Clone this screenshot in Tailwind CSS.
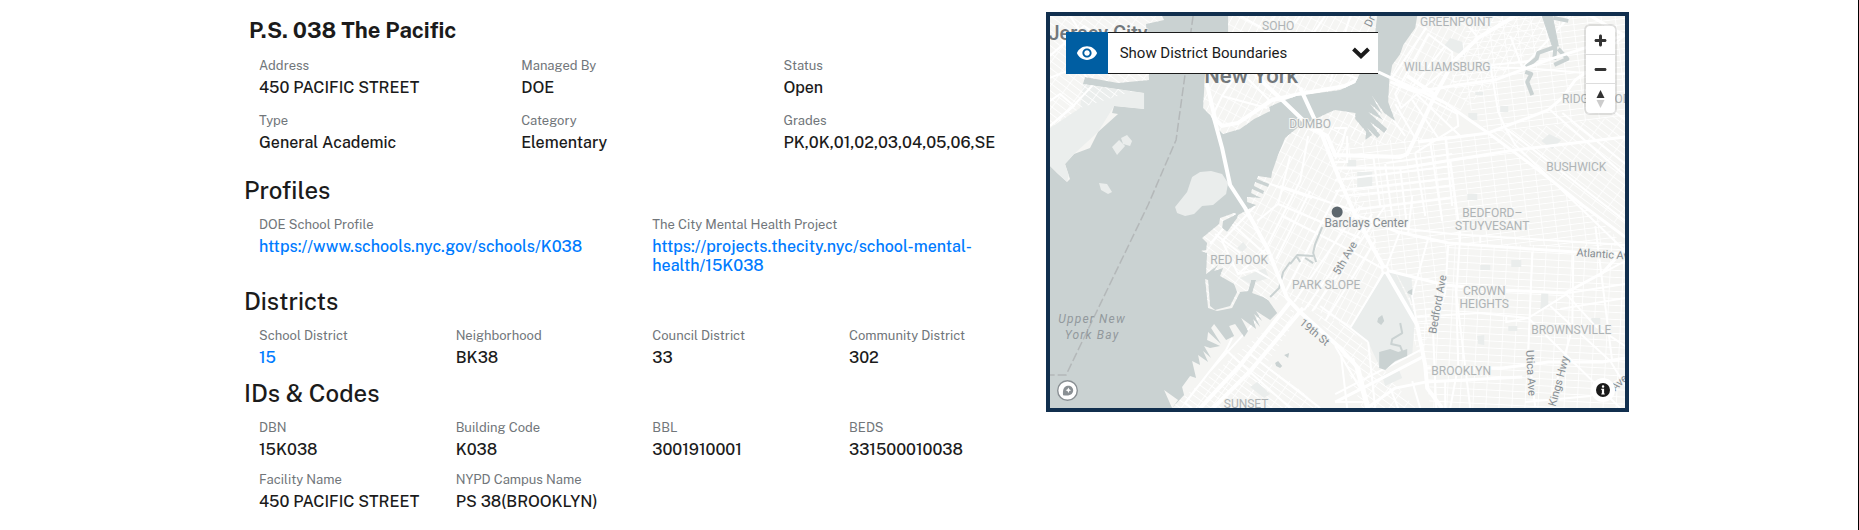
<!DOCTYPE html>
<html lang="en">
  <head>
    <meta charset="UTF-8" />
    <meta name="viewport" content="width=device-width, initial-scale=1.0" />
    <title>P.S. 038 The Pacific</title>
    <script src="https://cdn.jsdelivr.net/npm/@tailwindcss/browser@4"></script>
  </head>
  <body class="min-h-screen bg-white border-r border-black font-['Public_Sans','Inter',sans-serif] text-[#1b1b1b]">
    <main class="mx-auto max-w-[1400px] grid grid-cols-12">
      <section class="col-span-7 px-[15px] pt-4">
        <h1 class="pl-[5px] mb-3 text-[22px] leading-7 font-bold">P.S. 038 The Pacific</h1>

        <dl class="grid grid-cols-3 gap-y-[14px]">
          <div class="px-[15px]">
            <dt class="mb-0.5 text-[13px] leading-5 text-[#71767a]">Address</dt>
            <dd class="text-[16px] leading-[19px] font-medium">450 PACIFIC STREET</dd>
          </div>
          <div class="px-[15px]">
            <dt class="mb-0.5 text-[13px] leading-5 text-[#71767a]">Managed By</dt>
            <dd class="text-[16px] leading-[19px] font-medium">DOE</dd>
          </div>
          <div class="px-[15px]">
            <dt class="mb-0.5 text-[13px] leading-5 text-[#71767a]">Status</dt>
            <dd class="text-[16px] leading-[19px] font-medium">Open</dd>
          </div>
          <div class="px-[15px]">
            <dt class="mb-0.5 text-[13px] leading-5 text-[#71767a]">Type</dt>
            <dd class="text-[16px] leading-[19px] font-medium">General Academic</dd>
          </div>
          <div class="px-[15px]">
            <dt class="mb-0.5 text-[13px] leading-5 text-[#71767a]">Category</dt>
            <dd class="text-[16px] leading-[19px] font-medium">Elementary</dd>
          </div>
          <div class="px-[15px]">
            <dt class="mb-0.5 text-[13px] leading-5 text-[#71767a]">Grades</dt>
            <dd class="text-[16px] leading-[19px] font-medium">PK,0K,01,02,03,04,05,06,SE</dd>
          </div>
        </dl>

        <h2 class="mt-6 mb-2.5 text-[24px] leading-[29px] font-medium">Profiles</h2>
        <dl class="grid grid-cols-2">
          <div class="px-[15px]">
            <dt class="mb-0.5 text-[13px] leading-5 text-[#71767a]">DOE School Profile</dt>
            <dd class="text-[16px] leading-[19px] font-medium">
              <a href="https://www.schools.nyc.gov/schools/K038" class="text-[#007bff] hover:underline">https://www.schools.nyc.gov/schools/K038</a>
            </dd>
          </div>
          <div class="px-[15px]">
            <dt class="mb-0.5 text-[13px] leading-5 text-[#71767a]">The City Mental Health Project</dt>
            <dd class="text-[16px] leading-[19px] font-medium">
              <a href="https://projects.thecity.nyc/school-mental-health/15K038" class="text-[#007bff] hover:underline">https://projects.thecity.nyc/school-mental-health/15K038</a>
            </dd>
          </div>
        </dl>

        <h2 class="mt-3 mb-2.5 text-[24px] leading-[29px] font-medium">Districts</h2>
        <dl class="grid grid-cols-4">
          <div class="px-[15px]">
            <dt class="mb-0.5 text-[13px] leading-5 text-[#71767a]">School District</dt>
            <dd class="text-[16px] leading-[19px] font-medium">
              <a href="/districts/15" class="text-[#007bff] hover:underline">15</a>
            </dd>
          </div>
          <div class="px-[15px]">
            <dt class="mb-0.5 text-[13px] leading-5 text-[#71767a]">Neighborhood</dt>
            <dd class="text-[16px] leading-[19px] font-medium">BK38</dd>
          </div>
          <div class="px-[15px]">
            <dt class="mb-0.5 text-[13px] leading-5 text-[#71767a]">Council District</dt>
            <dd class="text-[16px] leading-[19px] font-medium">33</dd>
          </div>
          <div class="px-[15px]">
            <dt class="mb-0.5 text-[13px] leading-5 text-[#71767a]">Community District</dt>
            <dd class="text-[16px] leading-[19px] font-medium">302</dd>
          </div>
        </dl>

        <h2 class="mt-3 mb-2.5 text-[24px] leading-[29px] font-medium">IDs &amp; Codes</h2>
        <dl class="grid grid-cols-4 gap-y-[11px]">
          <div class="px-[15px]">
            <dt class="mb-0.5 text-[13px] leading-5 text-[#71767a]">DBN</dt>
            <dd class="text-[16px] leading-[19px] font-medium">15K038</dd>
          </div>
          <div class="px-[15px]">
            <dt class="mb-0.5 text-[13px] leading-5 text-[#71767a]">Building Code</dt>
            <dd class="text-[16px] leading-[19px] font-medium">K038</dd>
          </div>
          <div class="px-[15px]">
            <dt class="mb-0.5 text-[13px] leading-5 text-[#71767a]">BBL</dt>
            <dd class="text-[16px] leading-[19px] font-medium">3001910001</dd>
          </div>
          <div class="px-[15px]">
            <dt class="mb-0.5 text-[13px] leading-5 text-[#71767a]">BEDS</dt>
            <dd class="text-[16px] leading-[19px] font-medium">331500010038</dd>
          </div>
          <div class="px-[15px]">
            <dt class="mb-0.5 text-[13px] leading-5 text-[#71767a]">Facility Name</dt>
            <dd class="text-[16px] leading-[19px] font-medium">450 PACIFIC STREET</dd>
          </div>
          <div class="px-[15px]">
            <dt class="mb-0.5 text-[13px] leading-5 text-[#71767a]">NYPD Campus Name</dt>
            <dd class="text-[16px] leading-[19px] font-medium">PS 38(BROOKLYN)</dd>
          </div>
        </dl>
      </section>

      <section class="col-span-5 pt-3">
        <div class="relative h-[400px] overflow-hidden border-4 border-[#112f4e] bg-[#cad2d2]">
          <svg class="block w-full h-full" viewBox="0 0 575 392" preserveAspectRatio="xMidYMid slice" role="img" aria-label="Map of Brooklyn">
            <defs>
              <pattern id="grid-a" width="7" height="11" patternUnits="userSpaceOnUse" patternTransform="rotate(28)">
                <path d="M0 0H7M0 0V11" stroke="#fff" stroke-width="1.6" fill="none" />
              </pattern>
              <pattern id="grid-b" width="14" height="6" patternUnits="userSpaceOnUse" patternTransform="rotate(-7)">
                <path d="M0 0H14M0 0V6" stroke="#fff" stroke-width="1.6" fill="none" />
              </pattern>
              <pattern id="grid-c" width="6" height="14" patternUnits="userSpaceOnUse" patternTransform="rotate(-53)">
                <path d="M0 0H6M0 0V14" stroke="#fff" stroke-width="1.6" fill="none" />
              </pattern>
              <pattern id="grid-d" width="13" height="7" patternUnits="userSpaceOnUse" patternTransform="rotate(3)">
                <path d="M0 0H13M0 0V7" stroke="#fff" stroke-width="1.6" fill="none" />
              </pattern>
              <pattern id="grid-e" width="12" height="6" patternUnits="userSpaceOnUse" patternTransform="rotate(36)">
                <path d="M0 0H12M0 0V6" stroke="#fff" stroke-width="1.6" fill="none" />
              </pattern>
              <clipPath id="land">
                <path d="M367 0L365 12L353 29L350 38L342 49L339 66L338 86L345 105L334 97L322 80L332 98L320 88L333 104L318 96L337 113L334 117L320 106L330 119L327 122L317 112L322 119L315 124L316 116L305 103L305 97L285 94L280 96L263 104L247 112L235 122L228 139L222 156L221 162L208 160L207 163L219 168L218 171L205 166L204 170L214 175L213 178L202 173L201 177L211 182L197 181L197 186L206 189L188 199L187 202L177 216L172 212L173 205L181 201L186 198L184 197L170 202L169 208L152 222L157 227L156 234L151 235L157 237L156 258L168 249L164 255L173 252L170 260L184 268L187 276L180 290L165 294L160 290L158 264L155 263L158 292L167 295L182 292L190 276L198 275L201 264L206 264L202 277L213 281L218 284L227 297L220 304L206 295L212 305L204 298L210 311L203 303L206 313L191 302L198 315L194 321L185 308L179 310L184 320L176 324L164 308L161 312L171 328L158 316L157 324L170 330L160 332L154 330L161 342L153 335L158 346L148 339L150 349L142 345L146 362L140 360L132 371L134 379L122 392L114 374L128 384L122 392H575V0Z" />
                <path d="M178 0L178 16L155 58L153 92L160 99L167 112L173 118L190 113L204 103L220 95L219 91L230 86L246 80L290 74L305 67L310 57L325 16L327 0Z" />
                <path d="M0 0H112L114 4L96 8L99 64L68 67L35 61L33 68L94 77V93L64 90L62 97L68 98L48 116L40 132L24 138L15 148L20 163L17 166L8 158L0 150Z" />
              </clipPath>
            </defs>

            <!-- land -->
            <g clip-path="url(#land)">
              <rect width="575" height="392" fill="#f5f5f3" />
              <path d="M33 68L94 77V93L64 90L48 116L24 138L17 166L0 150V112L30 92Z" fill="#ebeeed" />
              <path d="M0 0H112V66L30 92L0 112Z" fill="url(#grid-c)" />
              <path d="M150 0H330V120H150Z" fill="url(#grid-a)" />
              <path d="M335 0H520L445 66L372 126L300 130V90Z" fill="url(#grid-a)" />
              <path d="M420 0H575V100L438 117L400 66Z" fill="url(#grid-b)" />
              <path d="M438 117L575 100V215L465 134Z" fill="url(#grid-c)" />
              <path d="M285 128L438 117L540 195L575 230H398L310 205Z" fill="url(#grid-b)" />
              <path d="M398 229H575V392H380L367 300L395 276Z" fill="url(#grid-d)" />
              <path d="M310 205L398 229L395 276L370 340L335 254Z" fill="url(#grid-b)" />
              <path d="M235 110H290L335 254L300 312L240 282L190 185Z" fill="url(#grid-a)" />
              <path d="M150 200L195 190L240 282L150 292Z" fill="url(#grid-c)" />
              <path d="M245 290L120 392H200L235 340Z" fill="url(#grid-e)" />
              <path d="M300 312L365 392H285L290 330L260 295Z" fill="url(#grid-e)" />
              <path d="M215 350L285 392H180Z" fill="url(#grid-e)" />
              <path d="M248 302L290 335L312 392H270L218 345Z" fill="#f5f5f3" />

              <!-- parks -->
              <g fill="#eaedec">
                <path d="M335 256H345L365 299L362 339L330 352L318 326L300 312Z" />
                <path d="M346 257L361 259L364 290ZM332 360L348 352L352 362L335 370Z" />
                <path d="M393 31L400 22L412 26L414 40ZM307 156H322V171H307ZM491 125L499 118L511 124L502 133ZM417 178H427V184H417Z" />
                <path d="M430 249H440V254H430ZM461 244H471V251H461ZM491 277H498V290L490 294ZM458 310H467V315H458ZM427 320L434 319V329L428 328Z" />
                <path d="M541 302H550V308H541ZM425 76H433V79H425ZM450 90H458V96H450ZM297 144H306V151H297ZM418 97H427V104H418Z" />
                <path d="M190 262L215 252L219 262L200 268ZM187 232L193 226L197 231L192 236ZM200 371L207 366L220 378L214 382Z" />
              </g>

              <!-- secondary roads -->
              <g fill="none" stroke="#fff" stroke-width="2">
                <path d="M403 46L351 92L345 78L378 18L402 36V46M395 30L362 71M376 12L342 62M345 65L407 98L408 110L365 137M366 78L410 120M362 84L388 122M345 88L365 122M355 120L343 104" />
                <path d="M285 143L292 128L296 112H284M297 120V146H285M323 140L330 190M335 148L342 200M350 152L357 212M365 137L375 200M380 126L392 205M395 120L402 190M336 147L402 138" />
                <path d="M285 164L402 150M285 175L402 162M295 195L402 182M290 180L402 170M400 144L410 219" />
                <path d="M395 51L472 52L535 57L575 58M440 49L448 96L455 112L465 129L580 240M460 20L472 52M428 22L410 0M472 52L520 0M498 44L440 49" />
                <path d="M512 97L575 148M455 112L575 205M535 74L575 104M500 94L575 160M575 19L545 44" />
                <path d="M305 199L348 212L402 218L575 229M430 219V227M410 219L406 280L408 349L400 392M398 229L395 276L383 319L386 392" />
                <path d="M482 236L478 336L485 391M523 239L522 312L512 349L498 389M367 301L428 297L478 302L518 277M478 302L456 306V301M405 269L420 392M395 392V366" />
                <path d="M478 302L570 392M500 290L560 345L575 370M515 277L545 310L575 330M518 277L575 268M510 293L575 282M552 257L575 245M545 210L562 346M475 386L540 380L575 360" />
                <path d="M350 215L335 254M378 222L362 280L367 309M362 180L358 217M300 312L335 254L290 229L232 200M262 295L335 190M275 305L325 225M318 326L300 312L270 290" />
                <path d="M244 286L310 190M254 294L322 198M236 275L288 175M226 243L260 175M218 228L250 165L258 120M207 205L228 188L240 140M228 188L310 222M230 170L305 195M220 168L262 182" />
                <path d="M205 190L172 225L188 258L205 254L219 262M165 218L190 237M193 189L160 228M217 232L188 258M180 206L217 240" />
                <path d="M176 334L135 387L142 392M176 334L190 347L240 392M200 338L270 392M182 322L176 334M225 305L190 349M210 300L160 355" />
                <path d="M285 378L372 333M291 340L297 392M303 342L316 392M318 326L325 392M340 372L348 392M362 365L370 392M285 330L318 386H285" />
                <path d="M225 0L172 80L163 99M190 0L300 60M250 0L205 61M275 0L230 66M200 20L310 64M215 42L250 72M172 80L217 92M190 55L220 85M300 0L280 66" />
                <path d="M0 85L10 78L24 90L0 110M10 20L42 70L25 88L0 110M0 40L34 10L64 30M20 0L60 60M0 62L30 50" />
              </g>

              <!-- highways and avenues -->
              <g fill="none" stroke="#fff" stroke-width="4">
                <path d="M465 0L428 22L403 46L385 79L365 122L357 138L350 141L285 139L277 120L260 111M357 60L385 79" />
                <path d="M155 60L165 103L172 110L188 107L222 84L250 78L295 70L312 62" />
                <path d="M240 286L190 349L150 392M253 292L200 355L163 392" />
              </g>
            </g>

            <!-- islands of the harbor -->
            <path d="M150 156L161 155L172 158L178 167L176 178L163 189L152 190L144 198L135 200L127 197L125 191L137 176L142 161Z" fill="#eaedec" />
            <path d="M62 131L69 124L75 130L67 139ZM71 122L77 119L82 125L80 130L73 128ZM49 167L57 168L62 176L58 178L51 174Z" fill="#eaedec" />

            <!-- creeks and canals -->
            <g fill="none" stroke="#cad2d2" stroke-linejoin="round">
              <path d="M496 0L503 18L505 31L488 37L486 44M503 2L518 5M505 32L504 44M508 33L517 43L504 49" stroke-width="4" />
              <path d="M492 0H502L508 30H502Z" fill="#cad2d2" stroke-width="1" />
              <path d="M486 43L476 51M475 56L481 58L477 66L482 79" stroke-width="4" />
              <path d="M272 211L265 228L263 237L266 246M263 240L247 239L240 248M255 242L263 247M247 241L250 246M240 246L233 256L229 272L220 281" stroke-width="2" />
              <path d="M350 307L352 317L342 323L341 328L350 330L352 335" stroke-width="2" />
            </g>
            <g fill="#cad2d2">
              <path d="M329 336L340 333L348 336L357 333V340L345 345L335 354L329 352Z" />
              <path d="M328 302L332 299L334 305L331 309L327 306ZM358 275L362 273V279L357 277ZM225 347L228 345L232 350L230 352L226 350ZM234 339L239 337L238 342Z" />
              <path d="M24 152L28 149L31 153L27 157Z" />
            </g>

            <!-- bridges and trunk roads -->
            <g fill="none" stroke="#fff" stroke-linejoin="round">
              <path d="M207 61L232 84L260 111M250 72L273 122L290 165L305 199L335 254L367 309L375 349L377 372L392 392" stroke-width="4" />
              <path d="M163 99L172 132L180 169L195 192L217 232L237 282L250 296L290 332L308 352L318 392" stroke-width="4" />
              <path d="M328 56L345 64L372 76L395 87L438 117L492 157L532 189L575 221" stroke-width="3" />
              <path d="M340 66L365 76L408 69L445 64L498 44L575 19" stroke-width="3" />
              <path d="M368 126L438 117L472 104L498 94L512 82L525 64L535 57M285 152H352L402 144L465 134L575 121" stroke-width="3" />
              <path d="M315 203L348 216L398 227L525 236L575 238M335 254L395 269L452 274L515 277L552 257L575 232" stroke-width="3" />
              <path d="M285 386L328 364L372 341M318 391L345 372L375 366L472 361M375 352L452 352L498 346L552 346L575 342M540 0L575 20" stroke-width="3" />
            </g>
            <circle cx="335" cy="254" r="3" fill="#f5f5f3" stroke="#fff" stroke-width="2" />

            <!-- state line -->
            <path d="M143 0L126 124L98 189L16 359H0" fill="none" stroke="#b4b8b9" stroke-width="1.5" stroke-dasharray="9 3" />

            <g class="font-['Roboto',sans-serif] text-[12px]" fill="#afb4b6" text-anchor="middle" stroke="#f5f5f3" stroke-width="2" paint-order="stroke">
              <text x="228" y="14">SOHO</text>
              <text x="260" y="112">DUMBO</text>
              <text x="406" y="10">GREENPOINT</text>
              <text x="397" y="55">WILLIAMSBURG</text>
              <text x="546" y="87">RIDGEWOOD</text>
              <text x="526" y="155">BUSHWICK</text>
              <text x="442" y="201">BEDFORD–</text>
              <text x="442" y="214">STUYVESANT</text>
              <text x="189" y="248">RED HOOK</text>
              <text x="276" y="273">PARK SLOPE</text>
              <text x="434" y="279">CROWN</text>
              <text x="434" y="292">HEIGHTS</text>
              <text x="521" y="318">BROWNSVILLE</text>
              <text x="411" y="359">BROOKLYN</text>
              <text x="196" y="392">SUNSET</text>
            </g>
            <g class="font-['Roboto',sans-serif] text-[11px]" fill="#868d92" text-anchor="middle" stroke="#f5f5f3" stroke-width="2" paint-order="stroke">
              <text x="316" y="211" class="text-[12px]">Barclays Center</text>
              <text transform="translate(298 244) rotate(-60)">5th Ave</text>
              <text transform="translate(262 319) rotate(40)">19th St</text>
              <text transform="translate(391 289) rotate(-80)">Bedford Ave</text>
              <text transform="translate(555 242) rotate(4)">Atlantic Ave</text>
              <text transform="translate(477 357) rotate(87)">Utica Ave</text>
              <text transform="translate(512 366) rotate(-75)">Kings Hwy</text>
              <text transform="translate(575 366) rotate(-42)">Ave D</text>
              <text transform="translate(323 7) rotate(-65)">Dr</text>
            </g>
            <g class="font-['Roboto',sans-serif] text-[12px] italic tracking-widest" fill="#92999d" text-anchor="middle">
              <text x="42" y="307">Upper New</text>
              <text x="42" y="323">York Bay</text>
            </g>
            <g class="font-['Roboto',sans-serif] font-medium" fill="#72787c" text-anchor="middle" stroke="#f5f5f3" stroke-width="1" paint-order="stroke">
              <text x="48" y="24" class="text-[20px]">Jersey City</text>
              <text x="201" y="67" class="text-[22px]">New York</text>
            </g>
            <circle cx="287" cy="196" r="5.5" fill="#5c666d" />
          </svg>

          <!-- layer toggle -->
          <button type="button" aria-expanded="false" class="absolute top-4 left-4 flex items-center w-[312px] h-[42px] bg-white border-y border-[#1b1b1b] text-left">
            <span class="-my-px flex items-center justify-center size-[42px] bg-[#005ea2]">
              <svg class="size-[22px]" viewBox="0 0 24 24" fill="#fff" aria-hidden="true">
                <path d="M12 4.5C7 4.5 2.73 7.61 1 12c1.73 4.39 6 7.5 11 7.5s9.27-3.11 11-7.5c-1.73-4.39-6-7.5-11-7.5zM12 17c-2.76 0-5-2.24-5-5s2.24-5 5-5 5 2.24 5 5-2.24 5-5 5zm0-8c-1.66 0-3 1.34-3 3s1.34 3 3 3 3-1.34 3-3-1.34-3-3-3z" />
              </svg>
            </span>
            <span class="flex-1 pl-3 font-['Roboto',sans-serif] text-[15px]">Show District Boundaries</span>
            <svg class="mr-2 w-[18px] h-3" viewBox="0 0 18 12" fill="none" stroke="#1b1b1b" stroke-width="4" aria-hidden="true">
              <path d="M1.5 2L9 9.2L16.5 2" />
            </svg>
          </button>

          <!-- zoom and compass -->
          <div class="absolute top-2.5 right-2.5 w-[29px] rounded bg-white ring-2 ring-black/10 divide-y divide-[#ddd]">
            <button type="button" aria-label="Zoom in" class="flex items-center justify-center w-full h-[29px]">
              <svg class="size-[29px]" viewBox="0 0 29 29" fill="#333" aria-hidden="true">
                <path d="M14.5 8.5c-.8 0-1.5.7-1.5 1.5v3h-3c-.8 0-1.5.7-1.5 1.5S9.2 16 10 16h3v3c0 .8.7 1.5 1.5 1.5S16 19.8 16 19v-3h3c.8 0 1.5-.7 1.5-1.5S19.8 13 19 13h-3v-3c0-.8-.7-1.5-1.5-1.5z" />
              </svg>
            </button>
            <button type="button" aria-label="Zoom out" class="flex items-center justify-center w-full h-[29px]">
              <svg class="size-[29px]" viewBox="0 0 29 29" fill="#333" aria-hidden="true">
                <path d="M10 13c-.8 0-1.5.7-1.5 1.5S9.2 16 10 16h9c.8 0 1.5-.7 1.5-1.5S19.8 13 19 13h-9z" />
              </svg>
            </button>
            <button type="button" aria-label="Reset bearing to north" class="flex items-center justify-center w-full h-[29px]">
              <svg class="size-[29px]" viewBox="0 0 29 29" aria-hidden="true">
                <path d="M10.5 14l4-8 4 8h-8z" fill="#333" />
                <path d="M10.5 16l4 8 4-8h-8z" fill="#ccc" />
              </svg>
            </button>
          </div>

          <a href="https://www.mapbox.com/" aria-label="Mapbox" class="absolute bottom-[7px] left-[7px]">
            <svg class="size-[21px]" viewBox="0 0 21 21" aria-hidden="true">
              <circle cx="10.5" cy="10.5" r="9.8" fill="#fff" stroke="#8a9094" stroke-width="1.4" />
              <path d="M6 15.2C5.6 11 6.4 8.5 7.8 7.1c2-1.9 5.100-1.9 7-.1 1.9 2 1.9 5-.1 7-1.4 1.3-4.2 1.9-8.7 1.2z" fill="#8a9094" />
              <path d="M11.4 7.4l.9 1.9 1.9.9-1.9.9-.9 1.9-.9-1.9-1.9-.9 1.9-.9z" fill="#fff" />
            </svg>
          </a>

          <button type="button" aria-label="Toggle attribution" class="absolute bottom-1.5 right-2.5 size-6 rounded-full bg-white">
            <svg class="size-6" viewBox="0 0 24 24" fill="#1b1b1b" fill-rule="evenodd" aria-hidden="true">
              <path d="M5 12a7 7 0 1 0 14 0 7 7 0 1 0-14 0m5.8-3.5a1.25 1.25 0 1 0 2.5 0 1.25 1.25 0 1 0-2.5 0M10.3 10.7v1.2h.6v3.5h-.6v1.2h3.4v-1.2h-.6v-4.7z" />
            </svg>
          </button>
        </div>
      </section>
    </main>
  </body>
</html>
